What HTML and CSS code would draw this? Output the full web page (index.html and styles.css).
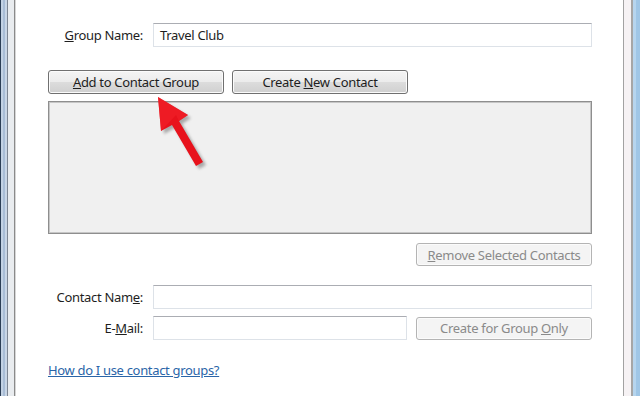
FILE: index.html
```html
<!DOCTYPE html>
<html>
<head>
<meta charset="utf-8">
<link rel="stylesheet" href="styles.css">
</head>
<body>
<div class="window">
  <div class="edge-left"></div>
  <div class="content">
    <div class="row group-row">
      <label class="lbl"><u>G</u>roup Name:</label>
      <div class="field">Travel Club</div>
    </div>
    <div class="btn-row">
      <button class="btn wide"><u>A</u>dd to Contact Group</button>
      <button class="btn wide">Create <u>N</u>ew Contact</button>
    </div>
    <div class="list"></div>
    <div class="remove-row">
      <button class="btn wide disabled"><u>R</u>emove Selected Contacts</button>
    </div>
    <div class="row contact-row">
      <label class="lbl">Contact Nam<u>e</u>:</label>
      <div class="field"></div>
    </div>
    <div class="row mail-row">
      <label class="lbl">E-<u>M</u>ail:</label>
      <div class="field short"></div>
      <button class="btn wide disabled">Create for Group <u>O</u>nly</button>
    </div>
    <a class="help" href="#">How do I use contact groups?</a>
    <svg class="arrow" width="70" height="80" viewBox="0 0 70 80">
      <defs>
        <filter id="sh" x="-30%" y="-30%" width="160%" height="160%">
          <feGaussianBlur stdDeviation="1.6"/>
        </filter>
      </defs>
      <g transform="translate(3,3)" fill="#7a7a7a" opacity="0.6" filter="url(#sh)">
        <polygon points="2,2 32,20 23,26 47,67 40,71 16,30 5,36"/>
      </g>
      <polygon points="2,2 32,20 23,26 47,67 40,71 16,30 5,36" fill="#e8121c"/>
      <polygon points="2,2 32,20 23,26 20,20 5,36" fill="#f2222a" opacity="0.6"/>
    </svg>
  </div>
  <div class="edge-right"></div>
</div>
</body>
</html>
```

FILE: styles.css
```css
* { box-sizing: border-box; }
html, body { margin: 0; padding: 0; background: #fff; }
body {
  font-family: "Noto Sans", "Open Sans", sans-serif;
  font-size: 13px;
  letter-spacing: -0.32px;
  color: #1e1e1e;
}
.window {
  width: 640px;
  height: 396px;
  display: flex;
  overflow: hidden;
}
.edge-left {
  width: 16px;
  flex: none;
  background: linear-gradient(to right,
    #2c3e55 0 1px, #c3d2e4 1px 3px, #a9bdd6 3px 5px, #c9d6e6 5px 7px,
    #7d8592 7px 8px, #e9ecef 8px 14px, #8a8a8a 14px 15px, #d6d6d6 15px 16px);
}
.edge-right {
  width: 18px;
  flex: none;
  background: linear-gradient(to right,
    #a2a2a2 0 1px, #f6f2f4 1px 8px, #a6a6a6 8px 10px,
    #b6d5ee 10px 13px, #9fc6e6 13px 17px, #2a4058 17px 18px);
}
.content {
  position: relative;
  flex: 1;
  padding: 23px 31px 0 32px;
}
.row {
  display: flex;
  align-items: center;
}
.lbl {
  width: 105px;
  padding-right: 10px;
  text-align: right;
  flex: none;
  white-space: nowrap;
}
.field {
  flex: 1;
  height: 24px;
  border: 1px solid #dde2e8;
  border-top-color: #abadb3;
  background: #fff;
  padding: 2px 6px;
  line-height: 18px;
}
.field.short { flex: none; width: 254px; height: 24px; }
.btn-row {
  display: flex;
  gap: 8px;
  margin-top: 23px;
}
.btn {
  font: inherit;
  letter-spacing: inherit;
  color: #1e1e1e;
  height: 24px;
  padding: 0;
  border: 1px solid #707070;
  border-radius: 3px;
  background: linear-gradient(to bottom, #f4f4f4 0, #ececec 48%, #dcdcdc 52%, #d0d0d0 100%);
  box-shadow: inset 0 0 0 1px #fbfbfb;
  white-space: nowrap;
}
.btn.wide { width: 176px; }
.btn.disabled {
  color: #8a8a8a;
  border-color: #b4b4b4;
  background: #f4f4f4;
}
.list {
  margin-top: 7px;
  height: 133px;
  border: 1px solid #8e8e8e;
  box-shadow: inset 0 0 0 1px #c6c6c6;
  background: #f0f0f0;
}
.remove-row {
  display: flex;
  justify-content: flex-end;
  margin-top: 9px;
}
.remove-row .btn { height: 23px; }
.contact-row { margin-top: 19px; }
.mail-row { margin-top: 7px; }
.mail-row .btn { margin-left: 9px; height: 23px; }
.help {
  display: inline-block;
  margin-top: 21px;
  color: #2a65a8;
  text-decoration: underline;
}
.arrow {
  position: absolute;
  left: 140px;
  top: 95px;
}
```
